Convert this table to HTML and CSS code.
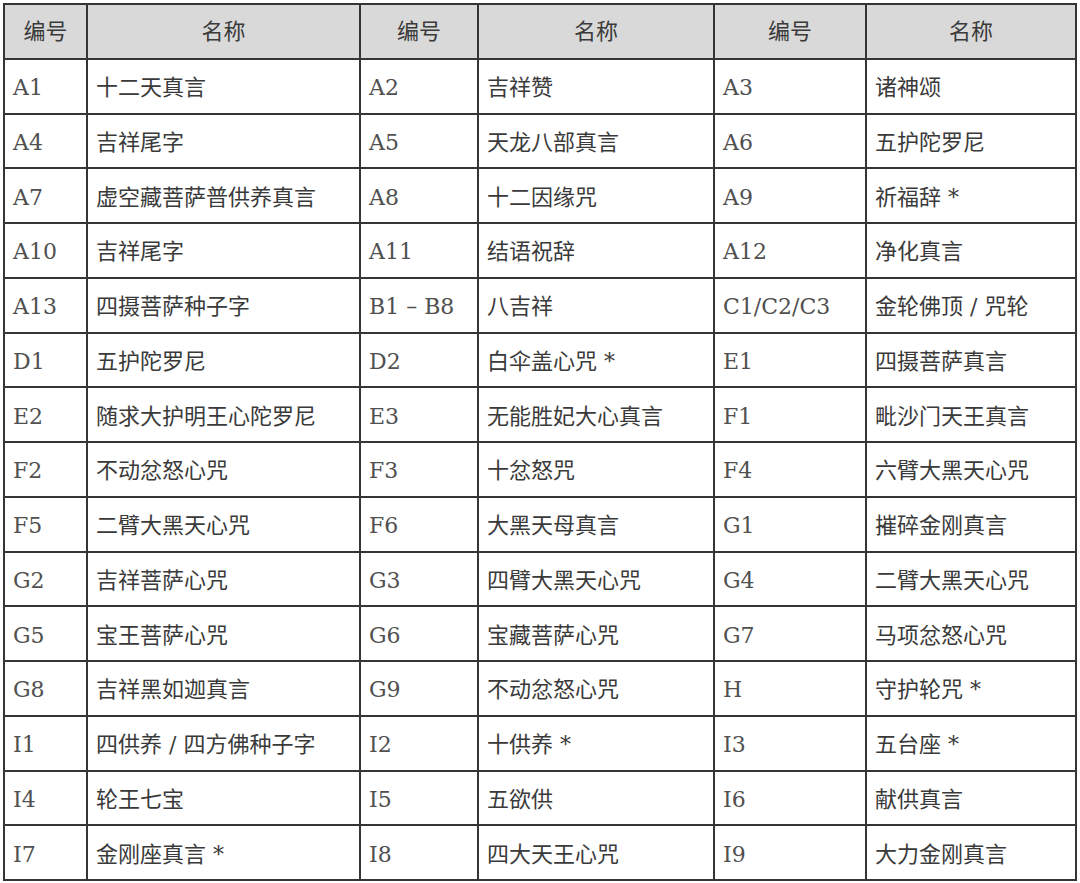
FILE: index.html
```html
<!DOCTYPE html>
<html lang="zh-CN">
<head>
<meta charset="utf-8">
<title>编号 名称</title>
<link rel="stylesheet" href="styles.css">
</head>
<body>
<div class="table">
  <div class="cell head">编号</div><div class="cell head">名称</div><div class="cell head">编号</div><div class="cell head">名称</div><div class="cell head">编号</div><div class="cell head">名称</div>

  <div class="cell code">A1</div><div class="cell">十二天真言</div><div class="cell code">A2</div><div class="cell">吉祥赞</div><div class="cell code">A3</div><div class="cell">诸神颂</div>
  <div class="cell code">A4</div><div class="cell">吉祥尾字</div><div class="cell code">A5</div><div class="cell">天龙八部真言</div><div class="cell code">A6</div><div class="cell">五护陀罗尼</div>
  <div class="cell code">A7</div><div class="cell">虚空藏菩萨普供养真言</div><div class="cell code">A8</div><div class="cell">十二因缘咒</div><div class="cell code">A9</div><div class="cell">祈福辞 *</div>
  <div class="cell code">A10</div><div class="cell">吉祥尾字</div><div class="cell code">A11</div><div class="cell">结语祝辞</div><div class="cell code">A12</div><div class="cell">净化真言</div>
  <div class="cell code">A13</div><div class="cell">四摄菩萨种子字</div><div class="cell code">B1 – B8</div><div class="cell">八吉祥</div><div class="cell code">C1/C2/C3</div><div class="cell">金轮佛顶 / 咒轮</div>
  <div class="cell code">D1</div><div class="cell">五护陀罗尼</div><div class="cell code">D2</div><div class="cell">白伞盖心咒 *</div><div class="cell code">E1</div><div class="cell">四摄菩萨真言</div>
  <div class="cell code">E2</div><div class="cell">随求大护明王心陀罗尼</div><div class="cell code">E3</div><div class="cell">无能胜妃大心真言</div><div class="cell code">F1</div><div class="cell">毗沙门天王真言</div>
  <div class="cell code">F2</div><div class="cell">不动忿怒心咒</div><div class="cell code">F3</div><div class="cell">十忿怒咒</div><div class="cell code">F4</div><div class="cell">六臂大黑天心咒</div>
  <div class="cell code">F5</div><div class="cell">二臂大黑天心咒</div><div class="cell code">F6</div><div class="cell">大黑天母真言</div><div class="cell code">G1</div><div class="cell">摧碎金刚真言</div>
  <div class="cell code">G2</div><div class="cell">吉祥菩萨心咒</div><div class="cell code">G3</div><div class="cell">四臂大黑天心咒</div><div class="cell code">G4</div><div class="cell">二臂大黑天心咒</div>
  <div class="cell code">G5</div><div class="cell">宝王菩萨心咒</div><div class="cell code">G6</div><div class="cell">宝藏菩萨心咒</div><div class="cell code">G7</div><div class="cell">马项忿怒心咒</div>
  <div class="cell code">G8</div><div class="cell">吉祥黑如迦真言</div><div class="cell code">G9</div><div class="cell">不动忿怒心咒</div><div class="cell code">H</div><div class="cell">守护轮咒 *</div>
  <div class="cell code">I1</div><div class="cell">四供养 / 四方佛种子字</div><div class="cell code">I2</div><div class="cell">十供养 *</div><div class="cell code">I3</div><div class="cell">五台座 *</div>
  <div class="cell code">I4</div><div class="cell">轮王七宝</div><div class="cell code">I5</div><div class="cell">五欲供</div><div class="cell code">I6</div><div class="cell">献供真言</div>
  <div class="cell code">I7</div><div class="cell">金刚座真言 *</div><div class="cell code">I8</div><div class="cell">四大天王心咒</div><div class="cell code">I9</div><div class="cell">大力金刚真言</div>
</div>
</body>
</html>
```
FILE: styles.css
```css
html, body {
  margin: 0;
  padding: 0;
  background: #ffffff;
}

body {
  padding: 3px 0 0 3px;
}

.table {
  display: grid;
  grid-template-columns: 83px 273px 118px 236px 152px 210px;
  grid-auto-rows: 54.75px;
  width: 1074px;
  box-sizing: border-box;
  border-top: 2px solid #353535;
  border-left: 2px solid #353535;
  font-family: "DejaVu Serif", "Noto Sans CJK SC", serif;
  font-size: 22px;
  line-height: 22px;
  color: #3a3a3a;
}

.cell {
  box-sizing: border-box;
  border-right: 2px solid #353535;
  border-bottom: 2px solid #353535;
  display: flex;
  align-items: center;
  padding: 4px 0 0 8px;
  white-space: nowrap;
  overflow: hidden;
}

.code {
  color: #505050;
}

.head {
  background: #d9d9d9;
  justify-content: center;
  padding: 2px 0 0 0;
}
```
